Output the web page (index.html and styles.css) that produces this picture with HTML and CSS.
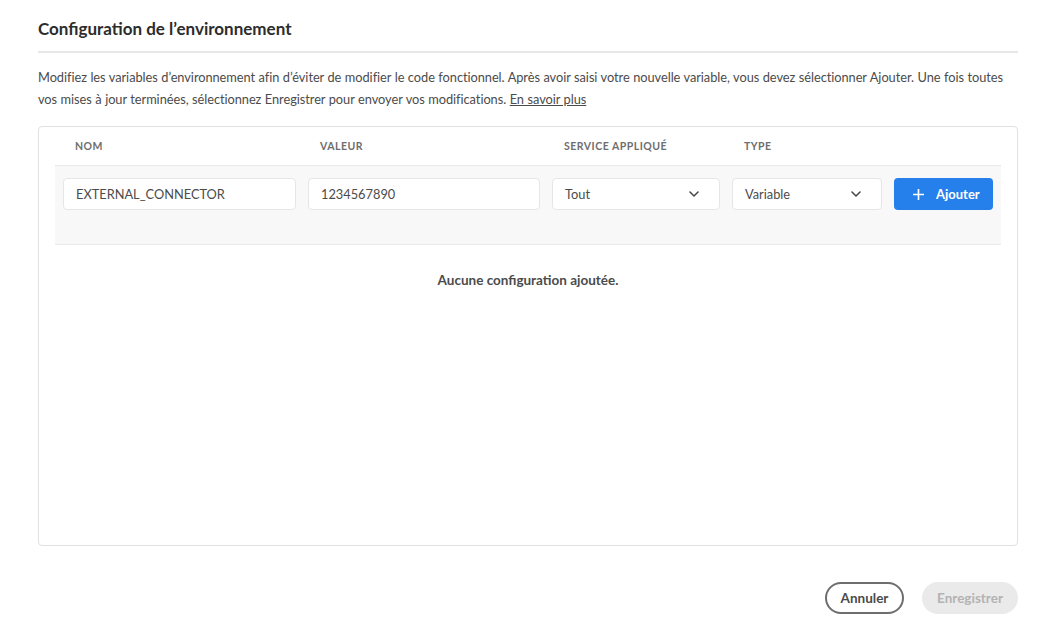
FILE: index.html
```html
<!DOCTYPE html>
<html lang="fr">
<head>
<meta charset="utf-8">
<title>Configuration de l'environnement</title>
<link rel="stylesheet" href="styles.css">
</head>
<body>
<main class="page">
  <h1 class="title">Configuration de l’environnement</h1>
  <hr class="divider">
  <p class="intro">Modifiez les variables d’environnement afin d’éviter de modifier le code fonctionnel. Après avoir saisi votre nouvelle variable, vous devez sélectionner Ajouter. Une fois toutes vos mises à jour terminées, sélectionnez Enregistrer pour envoyer vos modifications. <a class="link" href="#">En savoir plus</a></p>

  <section class="panel">
    <div class="grid head">
      <span class="col-label">Nom</span>
      <span class="col-label">Valeur</span>
      <span class="col-label">Service appliqué</span>
      <span class="col-label">Type</span>
      <span></span>
    </div>
    <div class="grid entry">
      <div class="field">EXTERNAL_CONNECTOR</div>
      <div class="field">1234567890</div>
      <div class="field select">Tout
        <svg class="chev" width="10" height="6" viewBox="0 0 10 6"><path d="M1 1l4 4 4-4" fill="none" stroke="#4b4b4b" stroke-width="1.6" stroke-linecap="round" stroke-linejoin="round"/></svg>
      </div>
      <div class="field select">Variable
        <svg class="chev" width="10" height="6" viewBox="0 0 10 6"><path d="M1 1l4 4 4-4" fill="none" stroke="#4b4b4b" stroke-width="1.6" stroke-linecap="round" stroke-linejoin="round"/></svg>
      </div>
      <button class="btn-add" type="button">
        <svg width="11" height="11" viewBox="0 0 12 12"><path d="M6 0.5v11M0.5 6h11" stroke="#fff" stroke-width="1.8" stroke-linecap="round"/></svg>
        <span>Ajouter</span>
      </button>
    </div>
    <p class="empty">Aucune configuration ajoutée.</p>
  </section>

  <footer class="actions">
    <button class="btn-cancel" type="button">Annuler</button>
    <button class="btn-save" type="button" disabled>Enregistrer</button>
  </footer>
</main>
</body>
</html>
```
FILE: styles.css
```css
* { box-sizing: border-box; }
html, body { margin: 0; padding: 0; background: #fff; }
body {
  font-family: Lato, "Open Sans", "Liberation Sans", sans-serif;
  color: #4b4b4b;
}
.page {
  width: 980px;
  margin-left: 38px;
  padding-top: 17px;
}
.title {
  margin: 0;
  font-size: 17px;
  font-weight: 700;
  color: #2c2c2c;
  line-height: 24px;
}
.divider {
  margin: 10px 0 0;
  border: 0;
  height: 2px;
  background: #e8e8e8;
}
.intro {
  margin: 13px 0 0;
  font-size: 12.8px;
  letter-spacing: -0.05px;
  word-spacing: 0.3px;
  line-height: 22px;
  color: #4b4b4b;
}
.link { color: #4b4b4b; text-decoration: underline; }
.panel {
  margin-top: 16px;
  height: 420px;
  border: 1px solid #e1e1e1;
  border-radius: 4px;
  padding: 0 16px;
}
.grid {
  display: grid;
  grid-template-columns: 233px 232px 168px 150px 99px;
  column-gap: 12px;
  padding: 0 8px;
}
.head {
  height: 38px;
  align-items: center;
}
.col-label {
  padding-left: 12px;
  font-size: 10.5px;
  font-weight: 700;
  letter-spacing: 0.5px;
  text-transform: uppercase;
  color: #6e6e6e;
}
.entry {
  background: #f8f8f8;
  border-top: 1px solid #eaeaea;
  border-bottom: 1px solid #eaeaea;
  padding-top: 12px;
  padding-bottom: 34px;
}
.field {
  height: 32px;
  background: #fff;
  border: 1px solid #e6e6e6;
  border-radius: 4px;
  padding: 0 12px;
  display: flex;
  align-items: center;
  font-size: 12.8px;
  color: #4b4b4b;
}
.select { justify-content: space-between; }
.chev { margin-right: 8px; }
.btn-add {
  height: 32px;
  border: 0;
  border-radius: 4px;
  background: #2680eb;
  color: #fff;
  font-family: inherit;
  font-size: 13px;
  font-weight: 700;
  display: flex;
  align-items: center;
  justify-content: flex-start;
  gap: 12px;
  padding: 0 0 0 19px;
}
.empty {
  margin: 27px 0 0;
  text-align: center;
  font-size: 13.5px;
  font-weight: 700;
  color: #4b4b4b;
}
.actions {
  margin-top: 36px;
  display: flex;
  justify-content: flex-end;
  gap: 18px;
}
.btn-cancel, .btn-save {
  height: 32px;
  border-radius: 16px;
  font-family: inherit;
  font-size: 13.5px;
  font-weight: 700;
  padding: 0 10px;
}
.btn-cancel {
  width: 79px;
  background: #fff;
  border: 2px solid #6e6e6e;
  color: #4b4b4b;
}
.btn-save {
  width: 96px;
  background: #eaeaea;
  border: 0;
  color: #b3b3b3;
}
```
